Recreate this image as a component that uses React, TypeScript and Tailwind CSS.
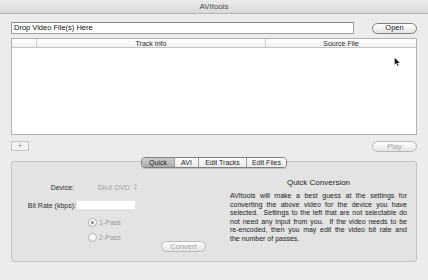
import React from "react";

const font = { fontFamily: '"Liberation Sans", Arial, sans-serif' };

function PillButton({ label, disabled }: { label: string; disabled?: boolean }) {
  return (
    <div
      className={
        "flex h-[11px] w-[45px] items-center justify-center rounded-full border text-[7.5px] leading-none bg-gradient-to-b from-white to-[#e4e4e4] " +
        (disabled ? "border-[#b8b8b8] text-[#a3a3a3]" : "border-[#7d7d7d] text-[#1a1a1a]")
      }
    >
      {label}
    </div>
  );
}

function Radio({ label, checked }: { label: string; checked?: boolean }) {
  return (
    <div className="flex h-[10px] items-center gap-[2px]">
      <div className="flex h-[9px] w-[9px] items-center justify-center rounded-full border border-[#b4b4b4] bg-gradient-to-b from-white to-[#ececec]">
        {checked && <div className="h-[3px] w-[3px] rounded-full bg-[#8a8a8a]" />}
      </div>
      <span className="text-[7px] leading-none text-[#9a9a9a]">{label}</span>
    </div>
  );
}

const lines = [
  "AVItools will make a best guess at the settings for",
  "converting the above video for the device you have",
  "selected.\u00a0 Settings to the left that are not selectable do",
  "not need any input from you.\u00a0 If the video needs to be",
  "re-encoded, then you may edit the video bit rate and",
];

export default function App() {
  return (
    <div className="relative flex h-[280px] w-[428px] flex-col overflow-hidden bg-[#ececec]" style={font}>
      {/* title bar */}
      <div className="flex h-[14px] shrink-0 items-center justify-center border-b border-[#b5b5b5] bg-gradient-to-b from-[#ececec] to-[#d9d9d9] text-[8px] leading-none text-[#4a4a4a]">
        AVItools
      </div>

      <div className="flex flex-col px-[11px]">
        {/* file row */}
        <div className="mt-[8px] flex items-center">
          <div className="flex h-[12px] w-[343px] items-center border border-[#9e9e9e] border-t-[#8a8a8a] bg-white pl-[2px] text-[7.5px] leading-none text-[#111]">
            Drop Video File(s) Here
          </div>
          <div className="ml-auto">
            <PillButton label="Open" />
          </div>
        </div>

        {/* table */}
        <div className="relative mt-[4px] flex h-[97px] flex-col border border-[#b2b2b2] bg-white">
          <div className="flex h-[9px] border-b border-[#c4c4c4] bg-gradient-to-b from-white to-[#f1f1f1] text-[7px] leading-none text-[#2a2a2a]">
            <div className="w-[25px] border-r border-[#cfcfcf]" />
            <div className="flex w-[229px] items-center justify-center border-r border-[#cfcfcf]">Track Info</div>
            <div className="flex flex-1 items-center justify-center">Source File</div>
          </div>
          <svg className="absolute left-[382px] top-[18px]" width="7" height="10" viewBox="0 0 7 10">
            <path d="M0.5 0.5 L0.5 8 L2.3 6.3 L3.6 9.3 L4.8 8.8 L3.6 6 L6.2 6 Z" fill="#111" stroke="#fff" strokeWidth="0.4" />
          </svg>
        </div>

        {/* + / Play row */}
        <div className="mt-[6px] flex h-[11px] items-start">
          <div className="flex h-[10px] w-[18px] items-center justify-center border border-[#c4c4c4] bg-[#f3f3f3] text-[8px] leading-none text-[#8c8c8c]">
            +
          </div>
          <div className="ml-auto">
            <PillButton label="Play" disabled />
          </div>
        </div>

        {/* segmented control */}
        <div className="relative z-10 mt-[5px] flex justify-center">
          <div className="flex h-[11px] overflow-hidden rounded-[4px] border border-[#7e7e7e] text-[7px] leading-none text-[#1e1e1e] shadow-[0_1px_1px_rgba(0,0,0,0.15)]">
            <div className="flex w-[32px] items-center justify-center bg-gradient-to-b from-[#cdcdcd] to-[#adadad]">Quick</div>
            <div className="flex w-[24px] items-center justify-center border-l border-[#9c9c9c] bg-gradient-to-b from-white to-[#e9e9e9]">AVI</div>
            <div className="flex w-[48px] items-center justify-center border-l border-[#9c9c9c] bg-gradient-to-b from-white to-[#e9e9e9]">Edit Tracks</div>
            <div className="flex w-[40px] items-center justify-center border-l border-[#9c9c9c] bg-gradient-to-b from-white to-[#e9e9e9]">Edit Files</div>
          </div>
        </div>

        {/* tab box */}
        <div className="-mt-[7px] flex h-[101px] rounded-[3px] border border-[#c3c3c3] bg-[#e3e3e3]">
          {/* left form */}
          <div className="flex w-[205px] flex-col">
            <div className="mt-[20px] flex h-[10px] items-center">
              <div className="w-[62px] text-right text-[7px] leading-none text-[#2e2e2e]">Device:</div>
              <div className="ml-[24px] flex items-center text-[7px] leading-none text-[#a0a0a0]">
                DivX DVD
                <span className="ml-[4px] flex flex-col text-[4px] leading-[4px] text-[#a8a8a8]">
                  <span>▲</span>
                  <span>▼</span>
                </span>
              </div>
            </div>
            <div className="mt-[8px] flex h-[10px] items-center">
              <div className="w-[64px] text-right text-[7px] leading-none text-[#2e2e2e]">Bit Rate (kbps):</div>
              <div className="h-[10px] w-[60px] border border-[#e6e6e6] bg-white" />
            </div>
            <div className="mt-[7px] flex items-start pl-[76px]">
              <div className="flex w-[73px] flex-col gap-[5px]">
                <Radio label="1-Pass" checked />
                <Radio label="2-Pass" />
              </div>
              <div className="mt-[24px]">
                <PillButton label="Convert" disabled />
              </div>
            </div>
          </div>

          {/* right description */}
          <div className="flex flex-1 flex-col pl-[13px] pr-[9px]">
            <div className="mt-[16px] h-[10px] text-center text-[8px] leading-[10px] text-[#1c1c1c]">Quick Conversion</div>
            <div className="mt-[4px] flex flex-col text-[7px] leading-[8.6px] text-[#1c1c1c]">
              {lines.map((l) => (
                <div key={l} className="whitespace-nowrap text-justify [text-align-last:justify]">
                  {l}
                </div>
              ))}
              <div>the number of passes.</div>
            </div>
          </div>
        </div>
      </div>
    </div>
  );
}
